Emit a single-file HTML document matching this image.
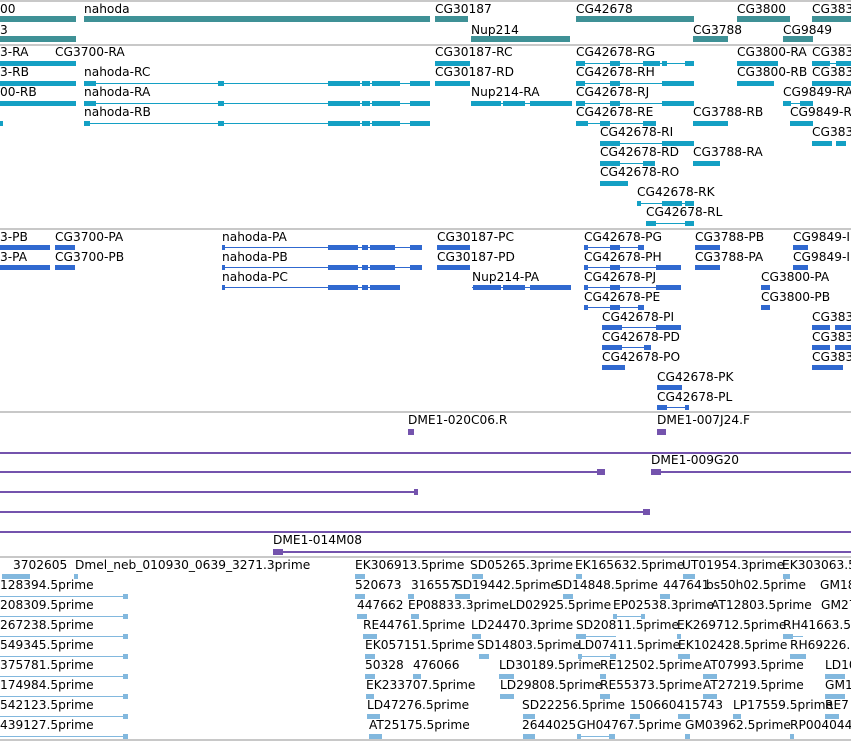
<!DOCTYPE html>
<html><head><meta charset="utf-8"><style>
body{margin:0;width:851px;height:741px;background:#fff;position:relative;overflow:hidden;font-family:"DejaVu Sans","Liberation Sans",sans-serif;font-size:12.2px;color:#000}
.t{position:absolute;white-space:pre;line-height:14px}
.s{position:absolute;left:0;width:851px;height:2px;background:#c8c8c8}
.b,.l{position:absolute}
.l{height:1px}
.A .b{background:#3f9196;height:6px}
.B .b{background:#14a0c4;height:5px}.B .l{background:#14a0c4}
.C .b{background:#3069d0;height:5px}.C .l{background:#3069d0}
.D .b{background:#7453ad;height:6px}.D .l{background:#7453ad;height:2px}
.E .b{background:#82b8de;height:5px}.E .l{background:#82b8de}
</style></head><body>
<div class="s" style="top:0"></div>
<div class="s" style="top:44px"></div>
<div class="s" style="top:228px"></div>
<div class="s" style="top:411px"></div>
<div class="s" style="top:556px"></div>
<div class="s" style="top:739px"></div>

<!-- section A -->
<div class="A">
<div class="t" style="left:0;top:2px">00</div>
<div class="t" style="left:84px;top:2px">nahoda</div>
<div class="t" style="left:435px;top:2px">CG30187</div>
<div class="t" style="left:576px;top:2px">CG42678</div>
<div class="t" style="left:737px;top:2px">CG3800</div>
<div class="t" style="left:812px;top:2px">CG383</div>
<div class="b" style="left:0;top:16px;width:76px"></div>
<div class="b" style="left:84px;top:16px;width:346px"></div>
<div class="b" style="left:435px;top:16px;width:33px"></div>
<div class="b" style="left:576px;top:16px;width:118px"></div>
<div class="b" style="left:737px;top:16px;width:53px"></div>
<div class="b" style="left:812px;top:16px;width:39px"></div>
<div class="t" style="left:0;top:23px">3</div>
<div class="t" style="left:471px;top:23px">Nup214</div>
<div class="t" style="left:693px;top:23px">CG3788</div>
<div class="t" style="left:783px;top:23px">CG9849</div>
<div class="b" style="left:0;top:36px;width:76px"></div>
<div class="b" style="left:471px;top:36px;width:99px"></div>
<div class="b" style="left:693px;top:36px;width:35px"></div>
<div class="b" style="left:783px;top:36px;width:30px"></div>
</div>

<!-- section B -->
<div class="B">
<div class="t" style="left:0;top:45px">3-RA</div><div class="t" style="left:55px;top:45px">CG3700-RA</div><div class="t" style="left:435px;top:45px">CG30187-RC</div><div class="t" style="left:576px;top:45px">CG42678-RG</div><div class="t" style="left:737px;top:45px">CG3800-RA</div><div class="t" style="left:812px;top:45px">CG383</div>
<div class="b" style="left:0;top:61px;width:76px"></div><div class="b" style="left:435px;top:61px;width:35px"></div>
<div class="l" style="left:576px;top:63px;width:118px"></div><div class="b" style="left:576px;top:61px;width:9px"></div><div class="b" style="left:610px;top:61px;width:10px"></div><div class="b" style="left:643px;top:61px;width:17px"></div><div class="b" style="left:662px;top:61px;width:5px"></div><div class="b" style="left:685px;top:61px;width:9px"></div>
<div class="b" style="left:737px;top:61px;width:41px"></div><div class="l" style="left:812px;top:63px;width:39px"></div><div class="b" style="left:812px;top:61px;width:18px"></div><div class="b" style="left:836px;top:61px;width:15px"></div>

<div class="t" style="left:0;top:65px">3-RB</div><div class="t" style="left:84px;top:65px">nahoda-RC</div><div class="t" style="left:435px;top:65px">CG30187-RD</div><div class="t" style="left:576px;top:65px">CG42678-RH</div><div class="t" style="left:737px;top:65px">CG3800-RB</div><div class="t" style="left:812px;top:65px">CG383</div>
<div class="b" style="left:0;top:81px;width:76px"></div>
<div class="l" style="left:84px;top:83px;width:346px"></div><div class="b" style="left:84px;top:81px;width:12px"></div><div class="b" style="left:218px;top:81px;width:6px"></div><div class="b" style="left:328px;top:81px;width:32px"></div><div class="b" style="left:362px;top:81px;width:8px"></div><div class="b" style="left:372px;top:81px;width:28px"></div><div class="b" style="left:410px;top:81px;width:20px"></div>
<div class="b" style="left:435px;top:81px;width:35px"></div>
<div class="l" style="left:576px;top:83px;width:118px"></div><div class="b" style="left:576px;top:81px;width:9px"></div><div class="b" style="left:610px;top:81px;width:10px"></div><div class="b" style="left:662px;top:81px;width:32px"></div>
<div class="b" style="left:737px;top:81px;width:37px"></div><div class="b" style="left:812px;top:81px;width:39px"></div>

<div class="t" style="left:0;top:85px">00-RB</div><div class="t" style="left:84px;top:85px">nahoda-RA</div><div class="t" style="left:471px;top:85px">Nup214-RA</div><div class="t" style="left:576px;top:85px">CG42678-RJ</div><div class="t" style="left:783px;top:85px">CG9849-RA</div>
<div class="b" style="left:0;top:101px;width:76px"></div>
<div class="l" style="left:84px;top:103px;width:346px"></div><div class="b" style="left:84px;top:101px;width:12px"></div><div class="b" style="left:218px;top:101px;width:6px"></div><div class="b" style="left:328px;top:101px;width:32px"></div><div class="b" style="left:362px;top:101px;width:8px"></div><div class="b" style="left:372px;top:101px;width:28px"></div><div class="b" style="left:410px;top:101px;width:20px"></div>
<div class="l" style="left:471px;top:103px;width:101px"></div><div class="b" style="left:471px;top:101px;width:30px"></div><div class="b" style="left:503px;top:101px;width:22px"></div><div class="b" style="left:530px;top:101px;width:42px"></div>
<div class="l" style="left:576px;top:103px;width:118px"></div><div class="b" style="left:576px;top:101px;width:9px"></div><div class="b" style="left:610px;top:101px;width:10px"></div><div class="b" style="left:662px;top:101px;width:32px"></div>
<div class="l" style="left:783px;top:103px;width:30px"></div><div class="b" style="left:783px;top:101px;width:8px"></div><div class="b" style="left:800px;top:101px;width:13px"></div>

<div class="t" style="left:84px;top:105px">nahoda-RB</div><div class="t" style="left:576px;top:105px">CG42678-RE</div><div class="t" style="left:693px;top:105px">CG3788-RB</div><div class="t" style="left:790px;top:105px">CG9849-R</div>
<div class="b" style="left:0;top:121px;width:3px"></div>
<div class="l" style="left:84px;top:123px;width:346px"></div><div class="b" style="left:84px;top:121px;width:6px"></div><div class="b" style="left:218px;top:121px;width:6px"></div><div class="b" style="left:328px;top:121px;width:32px"></div><div class="b" style="left:362px;top:121px;width:8px"></div><div class="b" style="left:372px;top:121px;width:28px"></div><div class="b" style="left:410px;top:121px;width:20px"></div>
<div class="l" style="left:576px;top:123px;width:80px"></div><div class="b" style="left:576px;top:121px;width:12px"></div><div class="b" style="left:600px;top:121px;width:10px"></div><div class="b" style="left:643px;top:121px;width:13px"></div>
<div class="b" style="left:693px;top:121px;width:35px"></div><div class="b" style="left:790px;top:121px;width:23px"></div>

<div class="t" style="left:600px;top:125px">CG42678-RI</div><div class="t" style="left:812px;top:125px">CG383</div>
<div class="l" style="left:600px;top:143px;width:94px"></div><div class="b" style="left:600px;top:141px;width:20px"></div><div class="b" style="left:662px;top:141px;width:32px"></div><div class="b" style="left:812px;top:141px;width:20px"></div><div class="b" style="left:836px;top:141px;width:10px"></div>
<div class="t" style="left:600px;top:145px">CG42678-RD</div><div class="t" style="left:693px;top:145px">CG3788-RA</div>
<div class="l" style="left:600px;top:163px;width:55px"></div><div class="b" style="left:600px;top:161px;width:20px"></div><div class="b" style="left:643px;top:161px;width:12px"></div><div class="b" style="left:693px;top:161px;width:27px"></div>
<div class="t" style="left:600px;top:165px">CG42678-RO</div>
<div class="b" style="left:600px;top:181px;width:28px"></div>
<div class="t" style="left:637px;top:185px">CG42678-RK</div>
<div class="l" style="left:637px;top:203px;width:57px"></div><div class="b" style="left:637px;top:201px;width:4px"></div><div class="b" style="left:662px;top:201px;width:20px"></div><div class="b" style="left:685px;top:201px;width:9px"></div>
<div class="t" style="left:646px;top:205px">CG42678-RL</div>
<div class="l" style="left:646px;top:223px;width:48px"></div><div class="b" style="left:646px;top:221px;width:10px"></div><div class="b" style="left:685px;top:221px;width:9px"></div>
</div>

<!-- section C -->
<div class="C">
<div class="t" style="left:0;top:230px">3-PB</div><div class="t" style="left:55px;top:230px">CG3700-PA</div><div class="t" style="left:222px;top:230px">nahoda-PA</div><div class="t" style="left:437px;top:230px">CG30187-PC</div><div class="t" style="left:584px;top:230px">CG42678-PG</div><div class="t" style="left:695px;top:230px">CG3788-PB</div><div class="t" style="left:793px;top:230px">CG9849-I</div>
<div class="b" style="left:0;top:245px;width:50px"></div><div class="b" style="left:55px;top:245px;width:20px"></div>
<div class="l" style="left:222px;top:247px;width:200px"></div><div class="b" style="left:222px;top:245px;width:3px"></div><div class="b" style="left:328px;top:245px;width:30px"></div><div class="b" style="left:362px;top:245px;width:6px"></div><div class="b" style="left:370px;top:245px;width:25px"></div><div class="b" style="left:410px;top:245px;width:12px"></div>
<div class="b" style="left:437px;top:245px;width:33px"></div>
<div class="l" style="left:584px;top:247px;width:60px"></div><div class="b" style="left:584px;top:245px;width:4px"></div><div class="b" style="left:610px;top:245px;width:10px"></div><div class="b" style="left:638px;top:245px;width:6px"></div>
<div class="b" style="left:695px;top:245px;width:25px"></div><div class="b" style="left:793px;top:245px;width:15px"></div>

<div class="t" style="left:0;top:250px">3-PA</div><div class="t" style="left:55px;top:250px">CG3700-PB</div><div class="t" style="left:222px;top:250px">nahoda-PB</div><div class="t" style="left:437px;top:250px">CG30187-PD</div><div class="t" style="left:584px;top:250px">CG42678-PH</div><div class="t" style="left:695px;top:250px">CG3788-PA</div><div class="t" style="left:793px;top:250px">CG9849-I</div>
<div class="b" style="left:0;top:265px;width:50px"></div><div class="b" style="left:55px;top:265px;width:20px"></div>
<div class="l" style="left:222px;top:267px;width:200px"></div><div class="b" style="left:222px;top:265px;width:3px"></div><div class="b" style="left:328px;top:265px;width:30px"></div><div class="b" style="left:362px;top:265px;width:6px"></div><div class="b" style="left:370px;top:265px;width:25px"></div><div class="b" style="left:410px;top:265px;width:12px"></div>
<div class="b" style="left:437px;top:265px;width:33px"></div>
<div class="l" style="left:584px;top:267px;width:97px"></div><div class="b" style="left:584px;top:265px;width:4px"></div><div class="b" style="left:610px;top:265px;width:10px"></div><div class="b" style="left:656px;top:265px;width:25px"></div>
<div class="b" style="left:695px;top:265px;width:25px"></div><div class="b" style="left:793px;top:265px;width:15px"></div>

<div class="t" style="left:222px;top:270px">nahoda-PC</div><div class="t" style="left:472px;top:270px">Nup214-PA</div><div class="t" style="left:584px;top:270px">CG42678-PJ</div><div class="t" style="left:761px;top:270px">CG3800-PA</div>
<div class="l" style="left:222px;top:287px;width:178px"></div><div class="b" style="left:222px;top:285px;width:3px"></div><div class="b" style="left:328px;top:285px;width:30px"></div><div class="b" style="left:362px;top:285px;width:6px"></div><div class="b" style="left:370px;top:285px;width:30px"></div>
<div class="l" style="left:472px;top:287px;width:99px"></div><div class="b" style="left:473px;top:285px;width:28px"></div><div class="b" style="left:503px;top:285px;width:22px"></div><div class="b" style="left:530px;top:285px;width:41px"></div>
<div class="l" style="left:584px;top:287px;width:97px"></div><div class="b" style="left:584px;top:285px;width:4px"></div><div class="b" style="left:610px;top:285px;width:10px"></div><div class="b" style="left:656px;top:285px;width:25px"></div>
<div class="b" style="left:761px;top:285px;width:9px"></div>

<div class="t" style="left:584px;top:290px">CG42678-PE</div><div class="t" style="left:761px;top:290px">CG3800-PB</div>
<div class="l" style="left:584px;top:307px;width:60px"></div><div class="b" style="left:584px;top:305px;width:4px"></div><div class="b" style="left:610px;top:305px;width:10px"></div><div class="b" style="left:638px;top:305px;width:6px"></div><div class="b" style="left:761px;top:305px;width:9px"></div>

<div class="t" style="left:602px;top:310px">CG42678-PI</div><div class="t" style="left:812px;top:310px">CG383</div>
<div class="l" style="left:602px;top:327px;width:79px"></div><div class="b" style="left:602px;top:325px;width:20px"></div><div class="b" style="left:656px;top:325px;width:25px"></div><div class="b" style="left:812px;top:325px;width:18px"></div><div class="b" style="left:835px;top:325px;width:16px"></div>
<div class="t" style="left:602px;top:330px">CG42678-PD</div><div class="t" style="left:812px;top:330px">CG383</div>
<div class="l" style="left:602px;top:347px;width:49px"></div><div class="b" style="left:602px;top:345px;width:20px"></div><div class="b" style="left:644px;top:345px;width:7px"></div><div class="b" style="left:812px;top:345px;width:18px"></div><div class="b" style="left:835px;top:345px;width:16px"></div>
<div class="t" style="left:602px;top:350px">CG42678-PO</div><div class="t" style="left:812px;top:350px">CG383</div>
<div class="b" style="left:602px;top:365px;width:23px"></div><div class="b" style="left:812px;top:365px;width:31px"></div>
<div class="t" style="left:657px;top:370px">CG42678-PK</div>
<div class="b" style="left:657px;top:385px;width:25px"></div>
<div class="t" style="left:657px;top:390px">CG42678-PL</div>
<div class="l" style="left:657px;top:407px;width:32px"></div><div class="b" style="left:657px;top:405px;width:10px"></div><div class="b" style="left:685px;top:405px;width:4px"></div>
</div>

<!-- section D -->
<div class="D">
<div class="t" style="left:408px;top:413px">DME1-020C06.R</div><div class="t" style="left:657px;top:413px">DME1-007J24.F</div>
<div class="b" style="left:408px;top:429px;width:6px"></div><div class="b" style="left:657px;top:429px;width:9px"></div>
<div class="l" style="left:0;top:452px;width:851px"></div>
<div class="t" style="left:651px;top:453px">DME1-009G20</div>
<div class="l" style="left:0;top:471px;width:605px"></div><div class="b" style="left:597px;top:469px;width:8px"></div>
<div class="l" style="left:651px;top:471px;width:200px"></div><div class="b" style="left:651px;top:469px;width:10px"></div>
<div class="l" style="left:0;top:491px;width:418px"></div><div class="b" style="left:414px;top:489px;width:4px"></div>
<div class="l" style="left:0;top:511px;width:650px"></div><div class="b" style="left:643px;top:509px;width:7px"></div>
<div class="l" style="left:0;top:531px;width:851px"></div>
<div class="t" style="left:273px;top:533px">DME1-014M08</div>
<div class="l" style="left:273px;top:551px;width:578px"></div><div class="b" style="left:273px;top:549px;width:10px"></div>
</div>

<!-- section E -->
<div class="E">
<div class="t" style="left:13px;top:558px">3702605  Dmel_neb_010930_0639_3271.3prime</div>
<div class="b" style="left:2px;top:574px;width:28px"></div><div class="b" style="left:74px;top:574px;width:4px"></div>
<div class="t" style="left:0;top:578px">128394.5prime</div>
<div class="t" style="left:0;top:598px">208309.5prime</div>
<div class="t" style="left:0;top:618px">267238.5prime</div>
<div class="t" style="left:0;top:638px">549345.5prime</div>
<div class="t" style="left:0;top:658px">375781.5prime</div>
<div class="t" style="left:0;top:678px">174984.5prime</div>
<div class="t" style="left:0;top:698px">542123.5prime</div>
<div class="t" style="left:0;top:718px">439127.5prime</div>
<div class="l" style="left:0;top:596px;width:128px"></div><div class="b" style="left:123px;top:594px;width:5px"></div>
<div class="l" style="left:0;top:616px;width:128px"></div><div class="b" style="left:123px;top:614px;width:5px"></div>
<div class="l" style="left:0;top:636px;width:128px"></div><div class="b" style="left:123px;top:634px;width:5px"></div>
<div class="l" style="left:0;top:656px;width:128px"></div><div class="b" style="left:123px;top:654px;width:5px"></div>
<div class="l" style="left:0;top:676px;width:128px"></div><div class="b" style="left:123px;top:674px;width:5px"></div>
<div class="l" style="left:0;top:696px;width:128px"></div><div class="b" style="left:123px;top:694px;width:5px"></div>
<div class="l" style="left:0;top:716px;width:128px"></div><div class="b" style="left:123px;top:714px;width:5px"></div>
<div class="l" style="left:0;top:736px;width:128px"></div><div class="b" style="left:123px;top:734px;width:5px"></div>

<div class="t" style="left:355px;top:558px">EK306913.5prime</div><div class="t" style="left:470px;top:558px">SD05265.3prime</div><div class="t" style="left:575px;top:558px">EK165632.5prime</div><div class="t" style="left:682px;top:558px">UT01954.3prime</div><div class="t" style="left:782px;top:558px">EK303063.5</div>
<div class="b" style="left:355px;top:574px;width:10px"></div><div class="b" style="left:472px;top:574px;width:11px"></div><div class="b" style="left:576px;top:574px;width:6px"></div><div class="b" style="left:683px;top:574px;width:12px"></div><div class="b" style="left:783px;top:574px;width:7px"></div>
<div class="t" style="left:355px;top:578px">520673</div><div class="t" style="left:411px;top:578px">316557</div><div class="t" style="left:455px;top:578px">SD19442.5prime</div><div class="t" style="left:555px;top:578px">SD14848.5prime</div><div class="t" style="left:663px;top:578px">447641</div><div class="t" style="left:706px;top:578px">bs50h02.5prime</div><div class="t" style="left:820px;top:578px">GM18</div>
<div class="b" style="left:355px;top:594px;width:10px"></div><div class="b" style="left:408px;top:594px;width:6px"></div><div class="b" style="left:455px;top:594px;width:15px"></div><div class="b" style="left:563px;top:594px;width:10px"></div><div class="b" style="left:660px;top:594px;width:10px"></div>
<div class="t" style="left:357px;top:598px">447662</div><div class="t" style="left:408px;top:598px">EP08833.3prime</div><div class="t" style="left:509px;top:598px">LD02925.5prime</div><div class="t" style="left:613px;top:598px">EP02538.3prime</div><div class="t" style="left:711px;top:598px">AT12803.5prime</div><div class="t" style="left:821px;top:598px">GM27</div>
<div class="b" style="left:357px;top:614px;width:10px"></div><div class="b" style="left:411px;top:614px;width:8px"></div><div class="l" style="left:613px;top:616px;width:32px"></div><div class="b" style="left:613px;top:614px;width:4px"></div><div class="b" style="left:641px;top:614px;width:4px"></div>
<div class="t" style="left:363px;top:618px">RE44761.5prime</div><div class="t" style="left:471px;top:618px">LD24470.3prime</div><div class="t" style="left:576px;top:618px">SD20811.5prime</div><div class="t" style="left:677px;top:618px">EK269712.5prime</div><div class="t" style="left:783px;top:618px">RH41663.5</div>
<div class="b" style="left:363px;top:634px;width:14px"></div><div class="b" style="left:472px;top:634px;width:9px"></div><div class="l" style="left:576px;top:636px;width:40px"></div><div class="b" style="left:576px;top:634px;width:10px"></div><div class="b" style="left:677px;top:634px;width:4px"></div><div class="l" style="left:783px;top:636px;width:20px"></div><div class="b" style="left:783px;top:634px;width:10px"></div>
<div class="t" style="left:365px;top:638px">EK057151.5prime</div><div class="t" style="left:477px;top:638px">SD14803.5prime</div><div class="t" style="left:578px;top:638px">LD07411.5prime</div><div class="t" style="left:678px;top:638px">EK102428.5prime</div><div class="t" style="left:790px;top:638px">RH69226.</div>
<div class="b" style="left:365px;top:654px;width:10px"></div><div class="b" style="left:479px;top:654px;width:10px"></div><div class="l" style="left:578px;top:656px;width:38px"></div><div class="b" style="left:578px;top:654px;width:4px"></div><div class="b" style="left:610px;top:654px;width:6px"></div><div class="b" style="left:678px;top:654px;width:12px"></div><div class="b" style="left:790px;top:654px;width:16px"></div>
<div class="t" style="left:365px;top:658px">50328</div><div class="t" style="left:413px;top:658px">476066</div><div class="t" style="left:499px;top:658px">LD30189.5prime</div><div class="t" style="left:600px;top:658px">RE12502.5prime</div><div class="t" style="left:703px;top:658px">AT07993.5prime</div><div class="t" style="left:825px;top:658px">LD10</div>
<div class="b" style="left:365px;top:674px;width:10px"></div><div class="b" style="left:413px;top:674px;width:8px"></div><div class="b" style="left:499px;top:674px;width:15px"></div><div class="b" style="left:600px;top:674px;width:6px"></div><div class="b" style="left:703px;top:674px;width:14px"></div><div class="b" style="left:825px;top:674px;width:20px"></div>
<div class="t" style="left:366px;top:678px">EK233707.5prime</div><div class="t" style="left:500px;top:678px">LD29808.5prime</div><div class="t" style="left:600px;top:678px">RE55373.5prime</div><div class="t" style="left:703px;top:678px">AT27219.5prime</div><div class="t" style="left:825px;top:678px">GM1</div>
<div class="b" style="left:366px;top:694px;width:8px"></div><div class="b" style="left:500px;top:694px;width:14px"></div><div class="b" style="left:600px;top:694px;width:10px"></div><div class="b" style="left:703px;top:694px;width:14px"></div><div class="b" style="left:825px;top:694px;width:20px"></div>
<div class="t" style="left:367px;top:698px">LD47276.5prime</div><div class="t" style="left:522px;top:698px">SD22256.5prime</div><div class="t" style="left:630px;top:698px">150660415743</div><div class="t" style="left:733px;top:698px">LP17559.5prime</div><div class="t" style="left:825px;top:698px">RE7</div>
<div class="b" style="left:367px;top:714px;width:13px"></div><div class="b" style="left:523px;top:714px;width:12px"></div><div class="b" style="left:630px;top:714px;width:10px"></div><div class="b" style="left:678px;top:714px;width:12px"></div><div class="b" style="left:733px;top:714px;width:8px"></div><div class="b" style="left:825px;top:714px;width:14px"></div>
<div class="t" style="left:369px;top:718px">AT25175.5prime</div><div class="t" style="left:522px;top:718px">2644025</div><div class="t" style="left:577px;top:718px">GH04767.5prime</div><div class="t" style="left:685px;top:718px">GM03962.5prime</div><div class="t" style="left:790px;top:718px">RP004044</div>
<div class="b" style="left:369px;top:734px;width:13px"></div><div class="b" style="left:523px;top:734px;width:12px"></div><div class="l" style="left:577px;top:736px;width:38px"></div><div class="b" style="left:577px;top:734px;width:4px"></div><div class="b" style="left:609px;top:734px;width:6px"></div><div class="b" style="left:685px;top:734px;width:5px"></div><div class="b" style="left:790px;top:734px;width:4px"></div>
</div>
</body></html>
